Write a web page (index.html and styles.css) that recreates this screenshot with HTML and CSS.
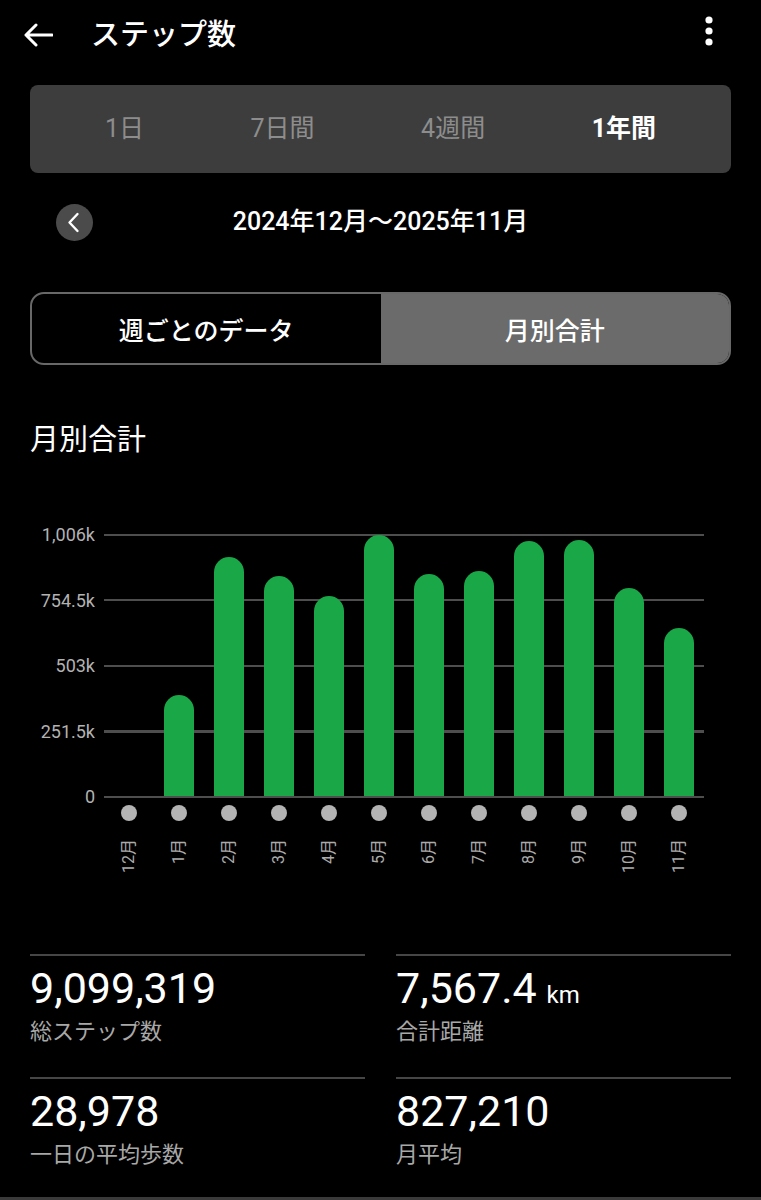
FILE: index.html
```html
<!DOCTYPE html>
<html lang="ja">
<head>
<meta charset="utf-8">
<title>ステップ数</title>
<link rel="stylesheet" href="styles.css">
</head>
<body>
<div class="app">
  <header class="topbar">
    <svg class="back" width="30" height="24" viewBox="0 0 30 24" aria-hidden="true">
      <path d="M29 12 H3 M13 2 L3 12 L13 22" fill="none" stroke="#fff" stroke-width="3" stroke-linecap="round" stroke-linejoin="round"/>
    </svg>
    <h1 class="title">ステップ数</h1>
    <svg class="kebab" width="10" height="34" viewBox="0 0 10 34" aria-hidden="true">
      <circle cx="5" cy="4" r="3.6" fill="#fff"/>
      <circle cx="5" cy="15" r="3.6" fill="#fff"/>
      <circle cx="5" cy="26" r="3.6" fill="#fff"/>
    </svg>
  </header>

  <nav class="periods">
    <span class="period">1日</span>
    <span class="period">7日間</span>
    <span class="period">4週間</span>
    <span class="period active">1年間</span>
  </nav>

  <div class="daterow">
    <div class="prev">
      <svg width="37" height="37" viewBox="0 0 37 37" aria-hidden="true">
        <path d="M21.5 10 L13.5 18.5 L21.5 27" fill="none" stroke="#fff" stroke-width="2.4" stroke-linecap="round" stroke-linejoin="round"/>
      </svg>
    </div>
    <div class="daterange">2024年12月～2025年11月</div>
    <div></div>
  </div>

  <div class="toggle">
    <div class="toggle-item">週ごとのデータ</div>
    <div class="toggle-item on">月別合計</div>
  </div>

  <h2 class="section-title">月別合計</h2>

  <div class="chart">
    <div class="yaxis">
      <span>1,006k</span>
      <span>754.5k</span>
      <span>503k</span>
      <span>251.5k</span>
      <span>0</span>
    </div>
    <div class="plot">
      <div class="slot"></div>
      <div class="slot"><div class="bar" style="height:101px"></div></div>
      <div class="slot"><div class="bar" style="height:239px"></div></div>
      <div class="slot"><div class="bar" style="height:220px"></div></div>
      <div class="slot"><div class="bar" style="height:200px"></div></div>
      <div class="slot"><div class="bar" style="height:261px"></div></div>
      <div class="slot"><div class="bar" style="height:222px"></div></div>
      <div class="slot"><div class="bar" style="height:225px"></div></div>
      <div class="slot"><div class="bar" style="height:255px"></div></div>
      <div class="slot"><div class="bar" style="height:256px"></div></div>
      <div class="slot"><div class="bar" style="height:208px"></div></div>
      <div class="slot"><div class="bar" style="height:168px"></div></div>
    </div>
    <div class="months">
      <div class="month"><span class="dot"></span><span class="mlabel">12月</span></div>
      <div class="month"><span class="dot"></span><span class="mlabel">1月</span></div>
      <div class="month"><span class="dot"></span><span class="mlabel">2月</span></div>
      <div class="month"><span class="dot"></span><span class="mlabel">3月</span></div>
      <div class="month"><span class="dot"></span><span class="mlabel">4月</span></div>
      <div class="month"><span class="dot"></span><span class="mlabel">5月</span></div>
      <div class="month"><span class="dot"></span><span class="mlabel">6月</span></div>
      <div class="month"><span class="dot"></span><span class="mlabel">7月</span></div>
      <div class="month"><span class="dot"></span><span class="mlabel">8月</span></div>
      <div class="month"><span class="dot"></span><span class="mlabel">9月</span></div>
      <div class="month"><span class="dot"></span><span class="mlabel">10月</span></div>
      <div class="month"><span class="dot"></span><span class="mlabel">11月</span></div>
    </div>
  </div>

  <div class="stats">
    <div class="stat">
      <div class="value">9,099,319</div>
      <div class="label">総ステップ数</div>
    </div>
    <div class="stat">
      <div class="value">7,567.4<span class="unit"> km</span></div>
      <div class="label">合計距離</div>
    </div>
    <div class="stat">
      <div class="value">28,978</div>
      <div class="label">一日の平均歩数</div>
    </div>
    <div class="stat">
      <div class="value">827,210</div>
      <div class="label">月平均</div>
    </div>
  </div>

  <div class="bottomline"></div>
</div>
</body>
</html>
```

FILE: styles.css
```css
* { box-sizing: border-box; }

html, body {
  margin: 0;
  padding: 0;
  background: #000;
}

body {
  font-family: Roboto, "Noto Sans CJK JP", sans-serif;
  color: #fff;
  width: 761px;
  height: 1200px;
  overflow: hidden;
}

.topbar {
  display: flex;
  align-items: center;
  height: 70px;
  padding: 0 47px 0 23px;
}

.back { flex: none; display: block; }

.title {
  flex: 1;
  margin: 0 0 0 38px;
  font-size: 29px;
  line-height: 40px;
  font-weight: 500;
}

.kebab { flex: none; display: block; margin-bottom: 4px; }

.periods {
  margin: 15px 30px 0;
  height: 88px;
  background: #3d3d3d;
  border-radius: 8px;
  display: flex;
  align-items: center;
  justify-content: space-between;
  padding: 0 75px;
}

.period {
  font-size: 25px;
  line-height: 34px;
  color: #8d8d8d;
}

.period.active {
  color: #fff;
  font-weight: 700;
}

.daterow {
  margin-top: 25px;
  height: 48px;
  padding: 0 30px;
  display: grid;
  grid-template-columns: 1fr auto 1fr;
  align-items: center;
}

.prev {
  margin-left: 26px;
  width: 37px;
  height: 37px;
  border-radius: 50%;
  background: #4b4b4b;
}

.prev svg { display: block; }

.daterange {
  font-size: 25px;
  font-weight: 500;
  line-height: 34px;
}

.toggle {
  margin: 46px 30px 0;
  height: 73px;
  border: 2px solid #686868;
  border-radius: 14px;
  overflow: hidden;
  display: flex;
}

.toggle-item {
  flex: 1;
  display: flex;
  align-items: center;
  justify-content: center;
  font-size: 25px;
  font-weight: 500;
}

.toggle-item.on {
  background: #6b6b6b;
}

.section-title {
  margin: 55px 30px 0;
  font-size: 29px;
  line-height: 40px;
  font-weight: 400;
}

.chart {
  margin-top: 74px;
  display: grid;
  grid-template-columns: 104px 600px;
  grid-template-rows: 264px 80px;
}

.yaxis {
  grid-column: 1;
  grid-row: 1;
  margin: -9px 0;
  height: 282px;
  display: flex;
  flex-direction: column;
  justify-content: space-between;
  align-items: flex-end;
  padding-right: 9px;
}

.yaxis span {
  font-size: 18px;
  line-height: 20px;
  color: #b2b2b2;
}

.plot {
  grid-column: 2;
  grid-row: 1;
  height: 264px;
  display: flex;
  align-items: flex-end;
  padding-bottom: 2px;
  background: repeating-linear-gradient(to bottom, #4e4e4e 0, #4e4e4e 2px, transparent 2px, transparent 65.5px);
}

.slot {
  width: 50px;
  display: flex;
  justify-content: center;
  align-items: flex-end;
}

.bar {
  width: 30px;
  background: #19a748;
  border-radius: 15px 15px 0 0;
}

.months {
  grid-column: 2;
  grid-row: 2;
  display: flex;
}

.month {
  width: 50px;
  display: flex;
  flex-direction: column;
  align-items: center;
}

.dot {
  margin-top: 7px;
  width: 16px;
  height: 16px;
  border-radius: 50%;
  background: #b3b3b3;
}

.mlabel {
  margin-top: 18px;
  font-size: 16px;
  line-height: 20px;
  color: #ababab;
  writing-mode: vertical-rl;
  text-orientation: sideways;
  transform: rotate(180deg);
}

.stats {
  margin-top: 76px;
  padding: 0 30px;
  display: grid;
  grid-template-columns: 1fr 1fr;
  column-gap: 31px;
  row-gap: 30px;
}

.stat {
  border-top: 2px solid #464646;
  padding-top: 7px;
}

.value {
  font-size: 43px;
  line-height: 50px;
  height: 50px;
  color: #fff;
}

.unit {
  font-size: 24px;
  line-height: 1;
  margin-left: 4px;
}

.label {
  margin-top: 4px;
  font-size: 22px;
  line-height: 30px;
  color: #a8a8a8;
}

.bottomline {
  margin-top: 27px;
  height: 3px;
  background: #3a3a3a;
}
```
